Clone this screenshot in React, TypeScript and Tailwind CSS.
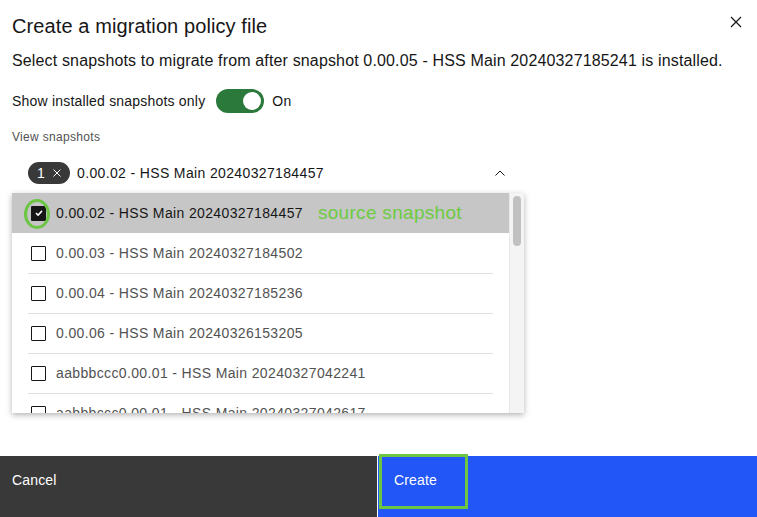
import React from "react";

const rows = [
  { label: "0.00.02 - HSS Main 20240327184457", checked: true },
  { label: "0.00.03 - HSS Main 20240327184502" },
  { label: "0.00.04 - HSS Main 20240327185236" },
  { label: "0.00.06 - HSS Main 20240326153205" },
  { label: "aabbbccc0.00.01 - HSS Main 20240327042241" },
  { label: "aabbbccc0.00.01 - HSS Main 20240327042617" },
];

function Checkbox({ checked }: { checked?: boolean }) {
  if (checked) {
    return (
      <div className="w-[15px] h-[15px] bg-[#161616] rounded-[1px] flex items-center justify-center shrink-0">
        <svg width="10" height="10" viewBox="0 0 10 10">
          <path d="M2 5.2 L4.1 7.2 L8 2.9" stroke="white" strokeWidth="1.6" fill="none" />
        </svg>
      </div>
    );
  }
  return <div className="w-[15px] h-[15px] border border-[#161616] rounded-[1px] shrink-0 bg-white" />;
}

export default function App() {
  return (
    <div className="w-[757px] h-[517px] bg-white relative flex flex-col font-['Liberation_Sans',sans-serif] text-[#161616] overflow-hidden">
      {/* Close */}
      <button className="absolute right-[14px] top-[15px] w-[14px] h-[14px] flex items-center justify-center">
        <svg width="12" height="12" viewBox="0 0 12 12">
          <path d="M1 1 L11 11 M11 1 L1 11" stroke="#161616" strokeWidth="1.2" />
        </svg>
      </button>

      <div className="px-3 pt-[12px]">
        <h2 className="text-[20px] leading-[28px] font-normal tracking-[0.1px]">Create a migration policy file</h2>
        <p className="mt-[9px] text-[16px] leading-[24px] tracking-[0.15px]">
          Select snapshots to migrate from after snapshot 0.00.05 - HSS Main 20240327185241 is installed.
        </p>

        <div className="mt-[16px] flex items-center h-[24px]">
          <span className="text-[14px] leading-[18px] tracking-[0.2px]">Show installed snapshots only</span>
          <div className="ml-[11px] w-[48px] h-[24px] rounded-full bg-[#2c7a3b] flex items-center justify-end pr-[3px]">
            <div className="w-[18px] h-[18px] rounded-full bg-white" />
          </div>
          <span className="ml-[8px] text-[14px] text-[#161616] tracking-[0.2px]">On</span>
        </div>

        <div className="mt-[16px] text-[12px] leading-[16px] text-[#525252] tracking-[0.32px]">View snapshots</div>

        <div className="mt-[17px] flex items-center h-[22px] w-[512px] pl-[16px] pr-[19px]">
          <div className="h-[22px] w-[42px] rounded-full bg-[#393939] text-white flex items-center pl-[9px] gap-[8px] text-[14px]">
            <span>1</span>
            <svg width="8" height="8" viewBox="0 0 8 8">
              <path d="M0.5 0.5 L7.5 7.5 M7.5 0.5 L0.5 7.5" stroke="white" strokeWidth="1" />
            </svg>
          </div>
          <span className="ml-[7px] text-[14px] tracking-[0.36px]">0.00.02 - HSS Main 20240327184457</span>
          <svg className="ml-auto" width="10" height="6" viewBox="0 0 10 6">
            <path d="M0.5 5.5 L5 1 L9.5 5.5" stroke="#161616" strokeWidth="1" fill="none" />
          </svg>
        </div>
      </div>

      {/* Dropdown list */}
      <div className="relative ml-[12px] mt-[9px] w-[512px] h-[220px] bg-white shadow-[0_2px_6px_rgba(0,0,0,0.3)] overflow-hidden flex">
        <div className="flex-1 overflow-hidden">
          {rows.map((r, i) => (
            <div key={i} className={r.checked ? "h-[40px] bg-[#c6c6c6]" : "h-[40px] px-[16px]"}>
              <div
                className={
                  r.checked
                    ? "h-full flex items-center pl-[19px] gap-[10px]"
                    : `h-full flex items-center pl-[3px] gap-[10px] ${i > 1 ? "border-t border-[#e0e0e0]" : ""}`
                }
              >
                <Checkbox checked={r.checked} />
                <span
                  className={
                    r.checked
                      ? "text-[14px] text-[#161616] tracking-[0.36px] whitespace-nowrap"
                      : "text-[14px] text-[#525252] tracking-[0.36px] whitespace-nowrap"
                  }
                >
                  {r.label}
                </span>
                {r.checked && (
                  <span className="ml-[5px] text-[19px] text-[#6ccb3f] tracking-[0.3px] whitespace-nowrap">
                    source snapshot
                  </span>
                )}
              </div>
            </div>
          ))}
        </div>
        <div className="w-[15px] bg-[#f4f4f4] border-l border-[#e8e8e8] flex justify-center pt-[3px]">
          <div className="w-[8px] h-[50px] rounded-full bg-[#c1c1c1]" />
        </div>
        {/* annotation ellipse */}
        <div className="absolute left-[12px] top-[6px] w-[26px] h-[30px] rounded-[50%] border-[3px] border-[#6cc644]" />
      </div>

      {/* Footer */}
      <div className="mt-auto h-[61px] flex">
        <div className="w-[377px] bg-[#393939] text-white text-[14px] pl-[12px] pt-[14px] tracking-[0.16px]">Cancel</div>
        <div className="w-px bg-white" />
        <div className="flex-1 bg-[#2356f6] text-white text-[14px] pl-[16px] pt-[14px] relative tracking-[0.16px]">
          Create
          <div className="absolute left-[1px] top-[-2px] w-[89px] h-[55px] border-[3px] border-[#6cc644]" />
        </div>
      </div>
    </div>
  );
}
